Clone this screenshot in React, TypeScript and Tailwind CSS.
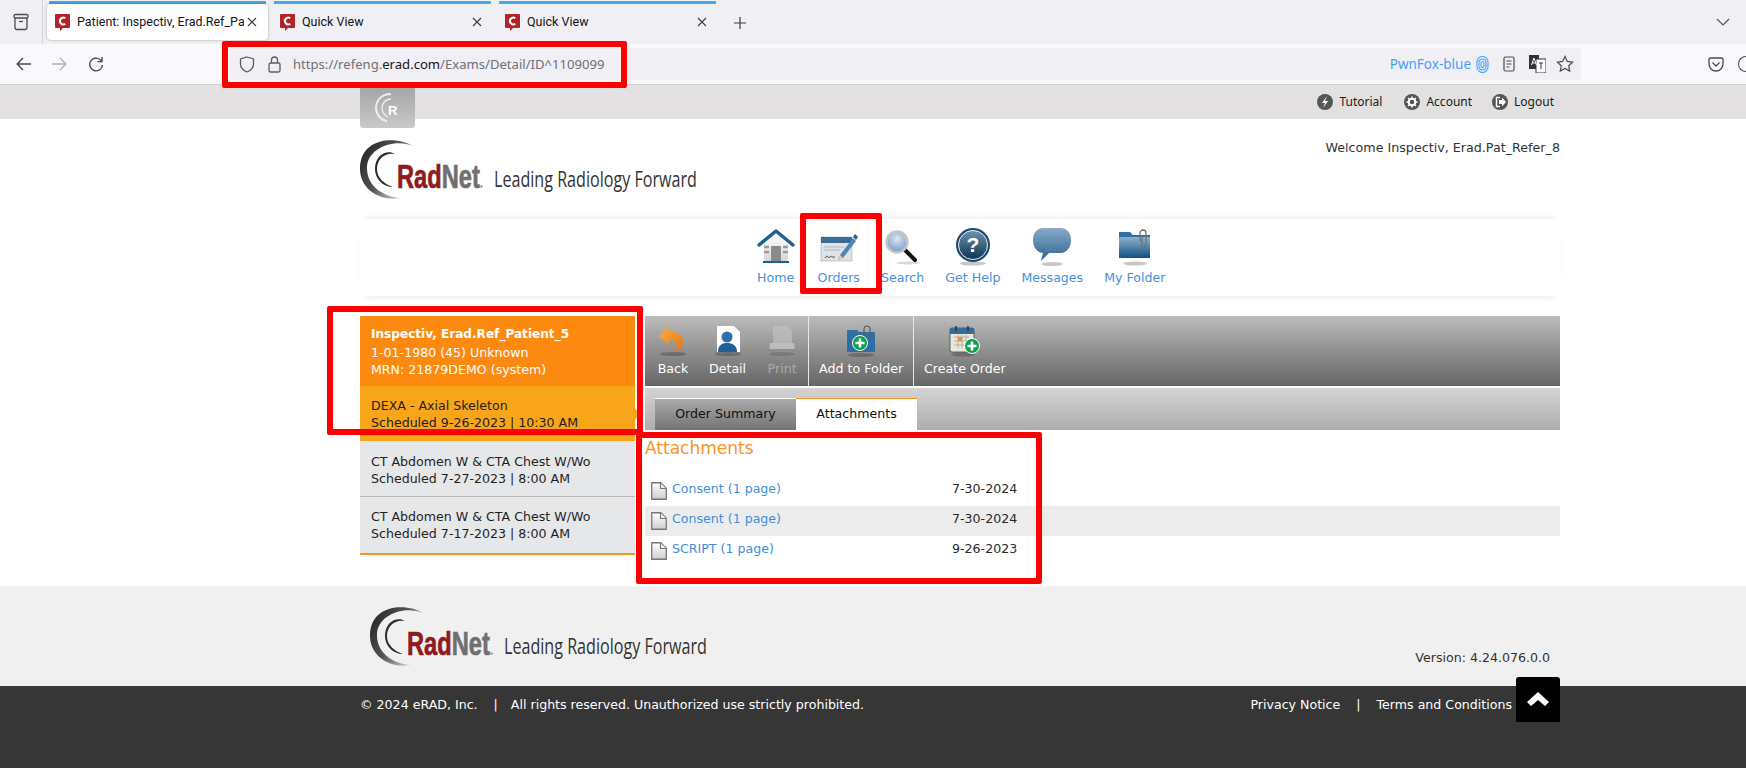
import React from "react";

function Favicon() {
  return (
    <svg width="15" height="17" viewBox="0 0 15 17" className="shrink-0">
      <path d="M1 0h13a1 1 0 0 1 1 1v12a1 1 0 0 1-1 1H8l-3 3v-3H1a1 1 0 0 1-1-1V1a1 1 0 0 1 1-1z" fill="#b3232b" />
      <path d="M10.3 4.2A3.4 3.4 0 1 0 10.3 9.8" fill="none" stroke="#fff" strokeWidth="2" />
    </svg>
  );
}

function Close({ className = "" }: { className?: string }) {
  return (
    <svg width="10" height="10" viewBox="0 0 10 10" className={className}>
      <path d="M1 1l8 8M9 1L1 9" stroke="#3a3a40" strokeWidth="1.1" />
    </svg>
  );
}

function BrowserTab({ title, active }: { title: string; active?: boolean }) {
  return (
    <div className="w-[225px] h-[44px] shrink-0 px-[2px] flex flex-col">
      <div className="h-[3px] mt-px mx-[2px] bg-[#3fa9ea] rounded-t-[1px]" />
      <div
        className={
          active
            ? "h-[36px] flex items-center pl-[8px] pr-[11px] bg-white rounded-[4px] shadow-[0_0_3px_rgba(0,0,0,0.3)]"
            : "h-[36px] flex items-center pl-[8px] pr-[11px]"
        }
      >
        <Favicon />
        <span className="ml-[7px] mt-px w-[167px] overflow-hidden whitespace-nowrap text-[12.5px] text-[#15141a] font-['Roboto',sans-serif]">{title}</span>
        <Close className="ml-auto" />
      </div>
    </div>
  );
}

function TabStrip() {
  return (
    <div className="h-[44px] bg-[#f0f0f4] flex items-start font-['Noto_Sans',sans-serif]">
      <div className="w-[43px] h-[44px] border-r border-[#d4d4d8] flex items-center justify-center">
        <svg width="18" height="18" viewBox="0 0 18 18" fill="none" stroke="#4a4a50" strokeWidth="1.3">
          <rect x="2" y="1.5" width="14" height="3.5" rx="1.2" />
          <path d="M3 5v9.5a2 2 0 0 0 2 2h8a2 2 0 0 0 2-2V5" />
          <path d="M7 8.5h4" />
        </svg>
      </div>
      <div className="ml-[2px] flex">
        <BrowserTab title="Patient: Inspectiv, Erad.Ref_Patient_5" active />
        <BrowserTab title="Quick View" />
        <BrowserTab title="Quick View" />
      </div>
      <svg width="12" height="12" viewBox="0 0 12 12" className="ml-[14px] mt-[17px]">
        <path d="M6 0v12M0 6h12" stroke="#3a3a40" strokeWidth="1.2" />
      </svg>
      <svg width="14" height="8" viewBox="0 0 14 8" className="ml-[970px] mt-[18px]" fill="none">
        <path d="M1 1l6 6 6-6" stroke="#55555b" strokeWidth="1.2" />
      </svg>
    </div>
  );
}

function NavBar() {
  return (
    <div className="h-[41px] bg-[#f9f9fb] border-b border-[#cfcfd8] flex items-center font-['Noto_Sans',sans-serif]">
      <svg width="16" height="14" viewBox="0 0 16 14" className="ml-[16px]" fill="none" stroke="#4a4a50" strokeWidth="1.4">
        <path d="M15 7H1.5M7 1L1.2 7 7 13" />
      </svg>
      <svg width="16" height="14" viewBox="0 0 16 14" className="ml-[19px]" fill="none" stroke="#b4b4b8" strokeWidth="1.4">
        <path d="M1 7h13.5M9 1l5.8 6L9 13" />
      </svg>
      <svg width="16" height="16" viewBox="0 0 16 16" className="ml-[21px]" fill="none" stroke="#4a4a50" strokeWidth="1.4">
        <path d="M13.5 5A6.4 6.4 0 1 0 14.5 9" />
        <path d="M14 1v4.6H9.4" />
      </svg>
      <div className="ml-[126px] w-[1351px] h-[32px] bg-[#f0f0f4] rounded-[4px] flex items-center">
        <svg width="16" height="17" viewBox="0 0 16 17" className="ml-[9px]" fill="none" stroke="#5b5b66" strokeWidth="1.3">
          <path d="M8 1l6.5 2v5c0 4-3 6.5-6.5 8C4.500 14.500 1.500 12 1.500 8V3z" />
        </svg>
        <svg width="13" height="17" viewBox="0 0 13 17" className="ml-[13px]" fill="none" stroke="#5b5b66" strokeWidth="1.3">
          <rect x="1" y="7" width="11" height="9" rx="1.5" />
          <path d="M3.500 7V4a3 3 0 0 1 6 0v3" />
        </svg>
        <span className="ml-[12px] mt-px text-[13.1px] text-[#6f6f76] whitespace-nowrap">
          https://refeng.<span className="text-[#15141a]">erad.com</span>/Exams/Detail/ID^1109099
        </span>
        <span className="ml-auto mt-px text-[13.5px] text-[#45a1ff] whitespace-nowrap">PwnFox-blue</span>
        <svg width="13" height="17" viewBox="0 0 13 17" className="ml-[5px]" fill="none" stroke="#45a1ff" strokeWidth="1.1">
          <path d="M1 6a5.500 5.500 0 0 1 11 0v5a5.500 5.500 0 0 1-11 0z" />
          <path d="M3 6.500a3.500 3.500 0 0 1 7 0v4a3.500 3.500 0 0 1-7 0z" />
          <path d="M5 7a1.500 1.500 0 0 1 3 0v3a1.500 1.500 0 0 1-3 0z" />
        </svg>
        <svg width="12" height="16" viewBox="0 0 12 16" className="ml-[14px]" fill="none" stroke="#4a4a50" strokeWidth="1.2">
          <rect x="1" y="1" width="10" height="14" rx="1.500" />
          <path d="M3.500 5h5M3.500 8h5M3.500 11h3" />
        </svg>
        <svg width="17" height="18" viewBox="0 0 17 18" className="ml-[14px]">
          <rect x="0" y="0" width="10" height="14" fill="#33333a" />
          <rect x="7" y="4" width="10" height="14" fill="#fff" stroke="#33333a" />
          <path d="M2.500 10L5 3l2.500 7M3.500 8h3" stroke="#fff" strokeWidth="1" fill="none" />
          <path d="M10 8h4M12 8v6" stroke="#33333a" strokeWidth="1" />
        </svg>
        <svg width="18" height="18" viewBox="0 0 18 18" className="ml-[10px] mr-[7px]" fill="none" stroke="#4a4a50" strokeWidth="1.2">
          <path d="M9 1.500l2.300 4.900 5.300.7-3.900 3.700 1 5.300L9 13.500l-4.700 2.600 1-5.300L1.400 7.100l5.300-.7z" />
        </svg>
      </div>
      <svg width="16" height="15" viewBox="0 0 16 15" className="ml-[127px]" fill="none" stroke="#4a4a50" strokeWidth="1.3">
        <path d="M2.500 1h11A1.500 1.500 0 0 1 15 2.500V7a7 7 0 0 1-14 0V2.500A1.500 1.500 0 0 1 2.500 1z" />
        <path d="M4.500 5.500L8 9l3.500-3.500" />
      </svg>
      <div className="ml-[14px] w-[8px] h-[16px] rounded-l-full border-l border-y border-[#4a4a50]" />
    </div>
  );
}

function RadNetLogo({ id }: { id: string }) {
  return (
    <svg width="420" height="62" viewBox="0 0 420 62" className="block">
      <defs>
        <linearGradient id={id} x1="0" y1="0" x2="1" y2="0.6">
          <stop offset="0" stopColor="#1c1c1c" />
          <stop offset="0.55" stopColor="#555" />
          <stop offset="1" stopColor="#d8d8d8" />
        </linearGradient>
      </defs>
      <path d="M53 7C38 -3 0 -3 0 30C0 50 20 63 41 59C24 58 7 48 7 29C7 9 34 -1 53 7Z" fill={`url(#${id})`} />
      <path d="M35 15C27 10 15 16 15 30C15 40 23 48 33 48C24 45 17 39 17 30C17 20 25 13 35 15Z" fill="#2a2a2a" />
      <g transform="scale(0.72 1)">
        <text x="51.4" y="49" fontFamily="'Liberation Sans',sans-serif" fontWeight="700" fontSize="33" strokeWidth="0.7" textLength="115" lengthAdjust="spacingAndGlyphs">
          <tspan fill="#8e1b1d" stroke="#8e1b1d">Rad</tspan>
          <tspan fill="#6f6f6f" stroke="#6f6f6f">Net</tspan>
        </text>
      </g>
      <circle cx="121.500" cy="47.500" r="1.300" fill="#999" />
      <g transform="scale(0.75 1)">
        <text x="178.7" y="48" fontFamily="'Open Sans',sans-serif" fontSize="22" fill="#333" textLength="270.6" lengthAdjust="spacingAndGlyphs">Leading Radiology Forward</text>
      </g>
    </svg>
  );
}

function Shadow({ cx, cy, rx }: { cx: number; cy: number; rx: number }) {
  return <ellipse cx={cx} cy={cy} rx={rx} ry="2" fill="#000" opacity="0.22" />;
}

function HomeIcon() {
  return (
    <svg width="38" height="38" viewBox="0 0 38 38">
      <defs>
        <linearGradient id="hwall" x1="0" y1="0" x2="0" y2="1">
          <stop offset="0" stopColor="#fff" />
          <stop offset="1" stopColor="#d8d8d8" />
        </linearGradient>
      </defs>
      <path d="M7 16L19 6l12 10v17H7z" fill="url(#hwall)" />
      <path d="M7 19h5M7 24h5M26 19h5M26 24h5" stroke="#9a9a9a" strokeWidth="2.500" />
      <rect x="14" y="18" width="10" height="15" fill="#8b8b8b" />
      <rect x="6" y="33" width="26" height="2" fill="#1f5f8b" />
      <path d="M2 17L19 3l17 14" fill="none" stroke="#1f6290" strokeWidth="3.500" strokeLinejoin="round" strokeLinecap="round" />
    </svg>
  );
}

function OrdersIcon() {
  return (
    <svg width="38" height="38" viewBox="0 0 38 38">
      <rect x="1" y="9" width="31" height="24" fill="#dfe3e6" stroke="#8fa3b2" strokeWidth="0.500" />
      <rect x="1" y="9" width="31" height="6" fill="#3c6c92" />
      <path d="M4 19h20M4 22h16" stroke="#aeb6bc" strokeWidth="1.200" />
      <path d="M5 30c2-4 3 1 5-1s2 1 5 0" stroke="#333" strokeWidth="0.900" fill="none" />
      <path d="M20 27l-2 5 5-2L36 13l-3-3z" fill="#4f86b5" />
      <path d="M33 9l2-3 3 3-2 3z" fill="#2f5f86" />
      <path d="M20 27l-2 5 5-2z" fill="#e8cfa5" />
    </svg>
  );
}

function SearchIcon() {
  return (
    <svg width="38" height="38" viewBox="0 0 38 38">
      <defs>
        <radialGradient id="lens" cx="0.5" cy="0.35" r="0.7">
          <stop offset="0" stopColor="#dde8f3" />
          <stop offset="1" stopColor="#6e92c0" />
        </radialGradient>
      </defs>
      <ellipse cx="24" cy="35" rx="12" ry="1.500" fill="#000" opacity="0.15" />
      <path d="M21 22l10 10" stroke="#111" strokeWidth="4" strokeLinecap="round" />
      <circle cx="13" cy="14" r="10.500" fill="url(#lens)" stroke="#c6c6c6" strokeWidth="2.500" />
    </svg>
  );
}

function HelpIcon() {
  return (
    <svg width="38" height="38" viewBox="0 0 38 38">
      <defs>
        <linearGradient id="hlp" x1="0" y1="0" x2="0" y2="1">
          <stop offset="0" stopColor="#6f93ad" />
          <stop offset="1" stopColor="#0e3350" />
        </linearGradient>
      </defs>
      <Shadow cx={19} cy={35.500} rx={13} />
      <circle cx="19" cy="17" r="17" fill="#1d4a6c" />
      <circle cx="19" cy="17" r="14.500" fill="url(#hlp)" stroke="#e7edf1" strokeWidth="1" />
      <text x="19" y="24" textAnchor="middle" fontFamily="'Liberation Sans',sans-serif" fontWeight="700" fontSize="21" fill="#fff">?</text>
    </svg>
  );
}

function MessagesIcon() {
  return (
    <svg width="38" height="38" viewBox="0 0 38 38">
      <defs>
        <linearGradient id="msg" x1="0" y1="0" x2="0" y2="1">
          <stop offset="0" stopColor="#8aa9c6" />
          <stop offset="1" stopColor="#2a6594" />
        </linearGradient>
      </defs>
      <Shadow cx={19} cy={36} rx={11} />
      <path d="M10 0h18c5 0 10 4 10 12s-5 13-10 13H16l-8 8 2-8C5 25 0 20 0 12S5 0 10 0z" fill="url(#msg)" />
    </svg>
  );
}

function FolderIcon() {
  return (
    <svg width="38" height="38" viewBox="0 0 38 38">
      <defs>
        <linearGradient id="fld" x1="0" y1="0" x2="0" y2="1">
          <stop offset="0" stopColor="#8fb2d0" />
          <stop offset="1" stopColor="#114f84" />
        </linearGradient>
      </defs>
      <Shadow cx={19} cy={35.500} rx={12} />
      <path d="M3 4h11l3 3h17v23H3z" fill="#32709f" />
      <rect x="3" y="9" width="31" height="21" rx="1" fill="url(#fld)" />
      <path d="M24 13V5a3 3 0 0 1 6 0v12a2 2 0 0 1-4 0V7" fill="none" stroke="#707070" strokeWidth="1.300" />
    </svg>
  );
}

const NAV = [
  { label: "Home", icon: <HomeIcon /> },
  { label: "Orders", icon: <OrdersIcon /> },
  { label: "Search", icon: <SearchIcon /> },
  { label: "Get Help", icon: <HelpIcon /> },
  { label: "Messages", icon: <MessagesIcon /> },
  { label: "My Folder", icon: <FolderIcon /> },
];

function Plus({ x, y }: { x: number; y: number }) {
  return (
    <g transform={`translate(${x} ${y})`}>
      <circle r="7.500" fill="#0fa24d" stroke="#fff" strokeWidth="1" />
      <path d="M0 -4.500V4.500M-4.500 0H4.500" stroke="#fff" strokeWidth="2.500" />
    </g>
  );
}

function BackIcon() {
  return (
    <svg width="32" height="32" viewBox="0 0 32 32">
      <defs>
        <linearGradient id="bk" x1="0" y1="0" x2="1" y2="1">
          <stop offset="0" stopColor="#fbb040" />
          <stop offset="1" stopColor="#e2761a" />
        </linearGradient>
      </defs>
      <Shadow cx={16} cy={29} rx={13} />
      <path d="M12 1L2 11l10 9v-5c5 0 8 2 8 6 0 2-2 4-3 5 6 0 9-4 9-9 0-7-6-11-14-11z" fill="url(#bk)" />
    </svg>
  );
}

function DetailIcon() {
  return (
    <svg width="32" height="32" viewBox="0 0 32 32">
      <Shadow cx={16} cy={29} rx={13} />
      <path d="M5 1h17l6 6v20H5z" fill="#fff" />
      <circle cx="15" cy="12" r="5.500" fill="#2f6fa6" />
      <path d="M6 27c0-7 4-9 9-9s10 2 10 9z" fill="#1f5f96" />
    </svg>
  );
}

function PrintIcon() {
  return (
    <svg width="32" height="32" viewBox="0 0 32 32" opacity="0.55">
      <Shadow cx={16} cy={29} rx={13} />
      <path d="M7 1h14l5 4v13H7z" fill="#c8c8c8" />
      <path d="M4 18h24l1 8H3z" fill="#dcdcdc" />
      <rect x="3" y="24" width="26" height="3" fill="#8c8c8c" />
    </svg>
  );
}

function AddFolderIcon() {
  return (
    <svg width="32" height="32" viewBox="0 0 32 32">
      <Shadow cx={16} cy={30} rx={13} />
      <path d="M2 5h10l2 2h16v20H2z" fill="#356f9c" />
      <rect x="2" y="9" width="28" height="18" fill="#2e6fa3" />
      <path d="M19 11V4a3 3 0 0 1 6 0v11" fill="none" stroke="#5a5a5a" strokeWidth="1.200" />
      <Plus x={15} y={18} />
    </svg>
  );
}

function CreateOrderIcon() {
  return (
    <svg width="32" height="32" viewBox="0 0 32 32">
      <Shadow cx={14} cy={29.500} rx={12} />
      <rect x="1" y="3" width="24" height="24" rx="2" fill="#e9e6dc" stroke="#444" strokeWidth="0.800" />
      <rect x="1" y="3" width="24" height="6" fill="#326c98" />
      <path d="M7 1v5M19 1v5" stroke="#333" strokeWidth="1.500" />
      <path d="M5 12h15M5 16h15M5 20h15M9 10v13M13 10v13M17 10v13" stroke="#b5b0a0" strokeWidth="1" />
      <rect x="9" y="12" width="4" height="4" fill="#e8913a" />
      <Plus x={23} y={21} />
    </svg>
  );
}

function Tool({ label, icon, dim }: { label: string; icon: React.ReactNode; dim?: boolean }) {
  return (
    <div className="flex flex-col items-center px-[10px] pt-[9px]">
      <div className="h-[32px] flex items-center justify-center">{icon}</div>
      <span className={dim ? "mt-[4px] text-[12.6px] leading-[16px] text-[#a8a8a8] whitespace-nowrap" : "mt-[4px] text-[12.6px] leading-[16px] text-white whitespace-nowrap"}>{label}</span>
    </div>
  );
}

function DocIcon() {
  return (
    <svg width="16" height="18" viewBox="0 0 16 18" className="shrink-0">
      <defs>
        <linearGradient id="doc" x1="0" y1="0" x2="0" y2="1">
          <stop offset="0" stopColor="#fff" />
          <stop offset="1" stopColor="#cfcfcf" />
        </linearGradient>
      </defs>
      <path d="M.75.75h9l5.500 5.500v11h-14.500z" fill="url(#doc)" stroke="#777" strokeWidth="1.300" />
      <path d="M9.500 1v5.500H15" fill="#eee" stroke="#777" strokeWidth="1.100" />
    </svg>
  );
}

function Attachment({ name, date, shaded }: { name: string; date: string; shaded?: boolean }) {
  return (
    <div className={shaded ? "h-[30px] flex items-center pl-[6px] bg-[#ececec]" : "h-[30px] flex items-center pl-[6px]"}>
      <DocIcon />
      <span className="ml-[5px] w-[280px] text-[12.6px] text-[#3f8fdb] -mt-[3px]">{name}</span>
      <span className="text-[12.6px] text-[#2a2a2a] -mt-[3px]">{date}</span>
    </div>
  );
}

function OrderRow({ title, when, last }: { title: string; when: string; last?: boolean }) {
  return (
    <div className={last ? "h-[58px] pl-[11px] pt-[11px] bg-[#e6e7e9] border-b-2 border-[#f7941d] text-[#1f1f1f]" : "h-[56px] pl-[11px] pt-[12px] bg-[#e6e7e9] border-b border-[#b9b9b9] text-[#1f1f1f]"}>
      <div>{title}</div>
      <div>{when}</div>
    </div>
  );
}

export default function App() {
  return (
    <div className="relative w-[1746px] h-[768px] overflow-hidden bg-white font-['DejaVu_Sans',Verdana,sans-serif]">
      <TabStrip />
      <NavBar />

      <header className="h-[34px] bg-[#e2e0e0]">
        <div className="ml-[360px] w-[1200px] h-full relative flex items-center justify-end text-[12px] text-[#1a1a1a] font-['Noto_Sans',sans-serif]">
          <div className="absolute left-0 top-0 w-[55px] h-[43px] rounded-b-[3px] bg-gradient-to-b from-[#a3a3a3] to-[#c9c9c9] flex items-center justify-center">
            <svg width="30" height="30" viewBox="0 0 30 30" fill="none">
              <path d="M18 2C8 2 3 9 3 16s5 12 11 13" stroke="#eee" strokeWidth="2" />
              <path d="M18 7c-6 0-9 5-9 9s3 8 6 9" stroke="#eee" strokeWidth="1.300" />
              <text x="15" y="23" fontFamily="'Liberation Sans',sans-serif" fontWeight="700" fontSize="13" fill="#fff">R</text>
            </svg>
          </div>
          <svg width="16" height="16" viewBox="0 0 16 16" className="mr-[6px]">
            <circle cx="8" cy="8" r="8" fill="#555" />
            <path d="M10 2L5 9h3l-2 5 5-7H8z" fill="#fff" />
          </svg>
          <span className="mr-[22px]">Tutorial</span>
          <svg width="16" height="16" viewBox="0 0 16 16" className="mr-[6px]">
            <circle cx="8" cy="8" r="8" fill="#555" />
            <circle cx="8" cy="8" r="3.300" fill="none" stroke="#fff" strokeWidth="2" strokeDasharray="none" />
            <path d="M8 2.500v2M8 11.500v2M2.500 8h2M11.500 8h2M4.100 4.100l1.400 1.400M10.500 10.500l1.400 1.400M11.900 4.100l-1.400 1.400M5.500 10.500l-1.400 1.400" stroke="#fff" strokeWidth="1.500" />
          </svg>
          <span className="mr-[20px]">Account</span>
          <svg width="16" height="16" viewBox="0 0 16 16" className="mr-[6px]">
            <circle cx="8" cy="8" r="8" fill="#555" />
            <path d="M8 3.500H4.500v9H8" fill="none" stroke="#fff" strokeWidth="1.500" />
            <path d="M7 6h3V3.500L14 8l-4 4.500V10H7z" fill="#fff" />
          </svg>
          <span className="mr-[6px]">Logout</span>
        </div>
      </header>

      <main className="h-[467px]">
        <div className="ml-[360px] w-[1200px]">
          <div className="h-[100px] relative">
            <div className="pt-[20px]">
              <RadNetLogo id="logoTop" />
            </div>
            <div className="absolute right-0 top-[21px] text-[12.7px] leading-[16px] text-[#333]">Welcome Inspectiv, Erad.Pat_Refer_8</div>
          </div>

          <nav className="h-[77px] bg-white flex justify-center gap-[21px] pl-[2px] pt-[9px] shadow-[0_-6px_8px_-6px_rgba(0,0,0,0.12),0_6px_8px_-6px_rgba(0,0,0,0.12)]">
            {NAV.map((n) => (
              <div key={n.label} className="flex flex-col items-center first:mr-[2px]">
                <div className="h-[38px] w-[38px] flex items-center justify-center">{n.icon}</div>
                <span className="mt-[4px] text-[12.6px] leading-[16px] text-[#4a90d9] whitespace-nowrap">{n.label}</span>
              </div>
            ))}
          </nav>

          <div className="mt-[20px] flex">
            <aside className="w-[275px] shrink-0 text-[12.6px] leading-[17px]">
              <div className="h-[70px] pl-[11px] pt-[10px] bg-[#fc8a11] text-white leading-[17.5px]">
                <div className="font-bold text-[12.1px]">Inspectiv, Erad.Ref_Patient_5</div>
                <div>1-01-1980 (45) Unknown</div>
                <div>MRN: 21879DEMO (system)</div>
              </div>
              <div className="relative h-[55px] pl-[11px] pt-[11px] bg-[#f9a51a] text-[#1f1f1f]">
                <div>DEXA - Axial Skeleton</div>
                <div>Scheduled 9-26-2023 | 10:30 AM</div>
                <div className="absolute left-full top-[22px] w-0 h-0 border-y-[6px] border-y-transparent border-l-[4px] border-l-[#f9a51a]" />
              </div>
              <OrderRow title="CT Abdomen W & CTA Chest W/Wo" when="Scheduled 7-27-2023 | 8:00 AM" />
              <OrderRow title="CT Abdomen W & CTA Chest W/Wo" when="Scheduled 7-17-2023 | 8:00 AM" last />
            </aside>

            <section className="ml-[10px] flex-1">
              <div className="h-[70px] flex pl-[2px] bg-gradient-to-b from-[#bcbcbc] to-[#666666]">
                <Tool label="Back" icon={<BackIcon />} />
                <Tool label="Detail" icon={<DetailIcon />} />
                <Tool label="Print" icon={<PrintIcon />} dim />
                <div className="w-px bg-[#e8e8e8]" />
                <Tool label="Add to Folder" icon={<AddFolderIcon />} />
                <div className="w-px bg-[#e8e8e8]" />
                <Tool label="Create Order" icon={<CreateOrderIcon />} />
              </div>
              <div className="mt-[2px] h-[42px] pl-[10px] pt-[10px] flex items-end bg-gradient-to-b from-[#d4d4d4] to-[#adadad] text-[12.6px]">
                <div className="w-[141px] h-[32px] flex items-center justify-center border-t border-white bg-gradient-to-b from-[#aaaaaa] to-[#747474] text-[#111]">Order Summary</div>
                <div className="w-[121px] h-[32px] flex items-center justify-center border-t border-[#f7941d] bg-white text-[#111]">Attachments</div>
              </div>
              <h2 className="mt-[6px] h-[24px] text-[17px] leading-[24px] text-[#f7941d]">Attachments</h2>
              <div className="mt-[16px]">
                <Attachment name="Consent (1 page)" date="7-30-2024" />
                <Attachment name="Consent (1 page)" date="7-30-2024" shaded />
                <Attachment name="SCRIPT (1 page)" date="9-26-2023" />
              </div>
            </section>
          </div>
        </div>
      </main>

      <div className="h-[100px] bg-[#f0f0f0]">
        <div className="ml-[360px] w-[1200px] h-full flex justify-between pl-[10px] pr-[10px]">
          <div className="pt-[20px]">
            <RadNetLogo id="logoBottom" />
          </div>
          <div className="self-end pb-[20px] text-[12.6px] leading-[16px] text-[#333]">Version: 4.24.076.0.0</div>
        </div>
      </div>

      <footer className="h-[82px] bg-[#363636]">
        <div className="relative ml-[360px] w-[1200px] pt-[11px] flex text-[12.6px] leading-[16px] text-white">
          <span>© 2024 eRAD, Inc.</span>
          <span className="ml-[16px]">|</span>
          <span className="ml-[13px]">All rights reserved. Unauthorized use strictly prohibited.</span>
          <span className="ml-auto">Privacy Notice</span>
          <span className="ml-[16px]">|</span>
          <span className="ml-[16px] mr-[48px]">Terms and Conditions</span>
          <div className="absolute right-0 -top-[9px] w-[44px] h-[45px] bg-black rounded-t-[3px] flex items-center justify-center">
            <svg width="24" height="17" viewBox="0 0 24 17">
              <path d="M12 1L23 11l-4 4-7-6-7 6-4-4z" fill="#fff" />
            </svg>
          </div>
        </div>
      </footer>

      <div className="absolute left-[222px] top-[41px] w-[405px] h-[47px] border-[6px] border-[#ff0000] rounded-[2px]" />
      <div className="absolute left-[800px] top-[213px] w-[82px] h-[81px] border-[6px] border-[#ff0000] rounded-[2px]" />
      <div className="absolute left-[327px] top-[306px] w-[316px] h-[129px] border-[6px] border-[#ff0000] rounded-[2px]" />
      <div className="absolute left-[636px] top-[432px] w-[406px] h-[152px] border-[6px] border-[#ff0000] rounded-[2px]" />
    </div>
  );
}
